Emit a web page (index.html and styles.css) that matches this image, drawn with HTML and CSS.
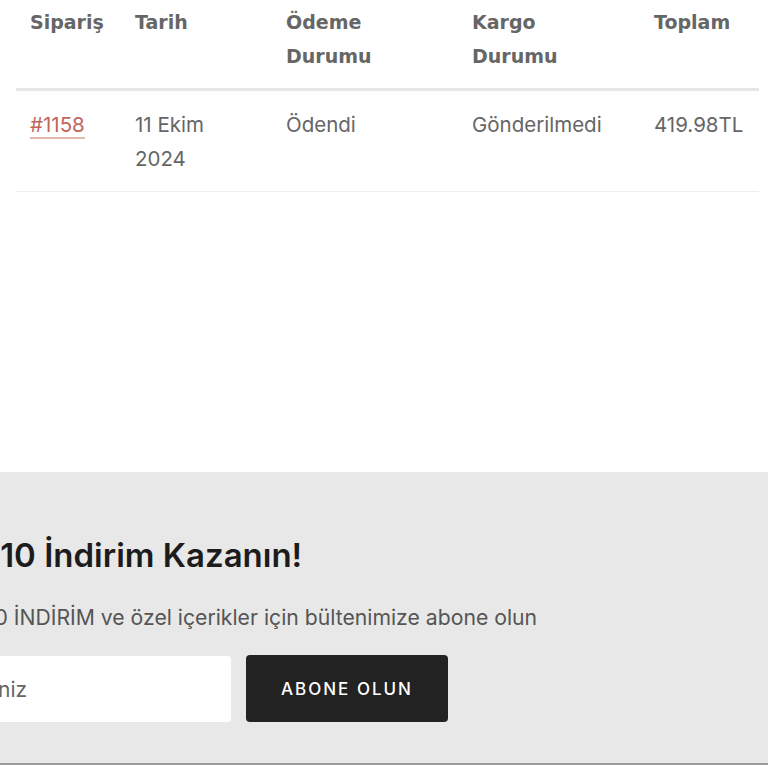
FILE: index.html
```html
<!DOCTYPE html>
<html lang="tr">
<head>
<meta charset="utf-8">
<link rel="stylesheet" href="styles.css">
</head>
<body>
<main class="orders">
  <table class="orders-table">
    <thead>
      <tr>
        <th class="c1">Sipariş</th>
        <th class="c2">Tarih</th>
        <th class="c3">Ödeme Durumu</th>
        <th class="c4">Kargo Durumu</th>
        <th class="c5">Toplam</th>
      </tr>
    </thead>
    <tbody>
      <tr>
        <td><a href="#" class="order-link">#1158</a></td>
        <td>11 Ekim 2024</td>
        <td>Ödendi</td>
        <td>Gönderilmedi</td>
        <td>419.98TL</td>
      </tr>
    </tbody>
  </table>
</main>
<section class="newsletter">
  <div class="newsletter-inner">
    <h2 class="nl-title">%10 İndirim Kazanın!</h2>
    <p class="nl-text">%10 İNDİRİM ve özel içerikler için bültenimize abone olun</p>
    <form class="nl-form">
      <input class="nl-input" type="email" placeholder="E-posta adresiniz">
      <button class="nl-btn" type="button">ABONE OLUN</button>
    </form>
  </div>
</section>
</body>
</html>
```

FILE: styles.css
```css
html, body {
  margin: 0;
  padding: 0;
  background: #fff;
  overflow: hidden;
}
body {
  font-family: Inter, "Noto Sans", sans-serif;
  color: #666;
  width: 768px;
  height: 768px;
}
.orders {
  padding: 0 9px 0 16px;
  height: 472px;
}
.orders-table {
  width: 743px;
  border-collapse: collapse;
  table-layout: fixed;
  font-size: 20.5px;
  line-height: 34px;
}
.orders-table th {
  font-family: "DejaVu Sans", Verdana, sans-serif;
  font-size: 19px;
  font-weight: 700;
  color: #666;
  text-align: left;
  vertical-align: top;
  padding: 5px 14px 15px;
  border-bottom: 3px solid #e6e6e6;
}
.orders-table td {
  text-align: left;
  vertical-align: top;
  padding: 17px 14px 15px;
  border-bottom: 1px solid #ededed;
  color: #666;
}
.c1 { width: 77px; }
.c2 { width: 123px; }
.c3 { width: 158px; }
.c4 { width: 154px; }
.order-link {
  color: #c0665a;
  text-decoration: underline;
  text-decoration-color: #e3b6ae;
  text-underline-offset: 5px;
}
.newsletter {
  background: #e8e8e8;
  height: 291px;
  border-bottom: 2px solid #9a9a9a;
}
.newsletter-inner {
  padding-top: 62px;
}
.nl-title {
  margin: 0 0 0 -33px;
  font-size: 33px;
  font-weight: 600;
  color: #1c1c1c;
  line-height: 42px;
}
.nl-text {
  margin: 26px 0 0 -35px;
  font-size: 21.2px;
  color: #555;
  line-height: 30px;
}
.nl-form {
  display: flex;
  gap: 15px;
  margin: 23px 0 0 -166px;
}
.nl-input {
  width: 397px;
  height: 66px;
  margin-top: 1px;
  box-sizing: border-box;
  border: none;
  border-radius: 3px;
  background: #fff;
  padding: 0 22px 0 20px;
  font-family: inherit;
  font-size: 21px;
  color: #555;
}
.nl-input::placeholder {
  color: #666;
}
.nl-btn {
  width: 202px;
  height: 67px;
  border: none;
  border-radius: 4px;
  background: #222;
  color: #fff;
  font-family: inherit;
  font-size: 17px;
  font-weight: 500;
  letter-spacing: 2px;
}
```
